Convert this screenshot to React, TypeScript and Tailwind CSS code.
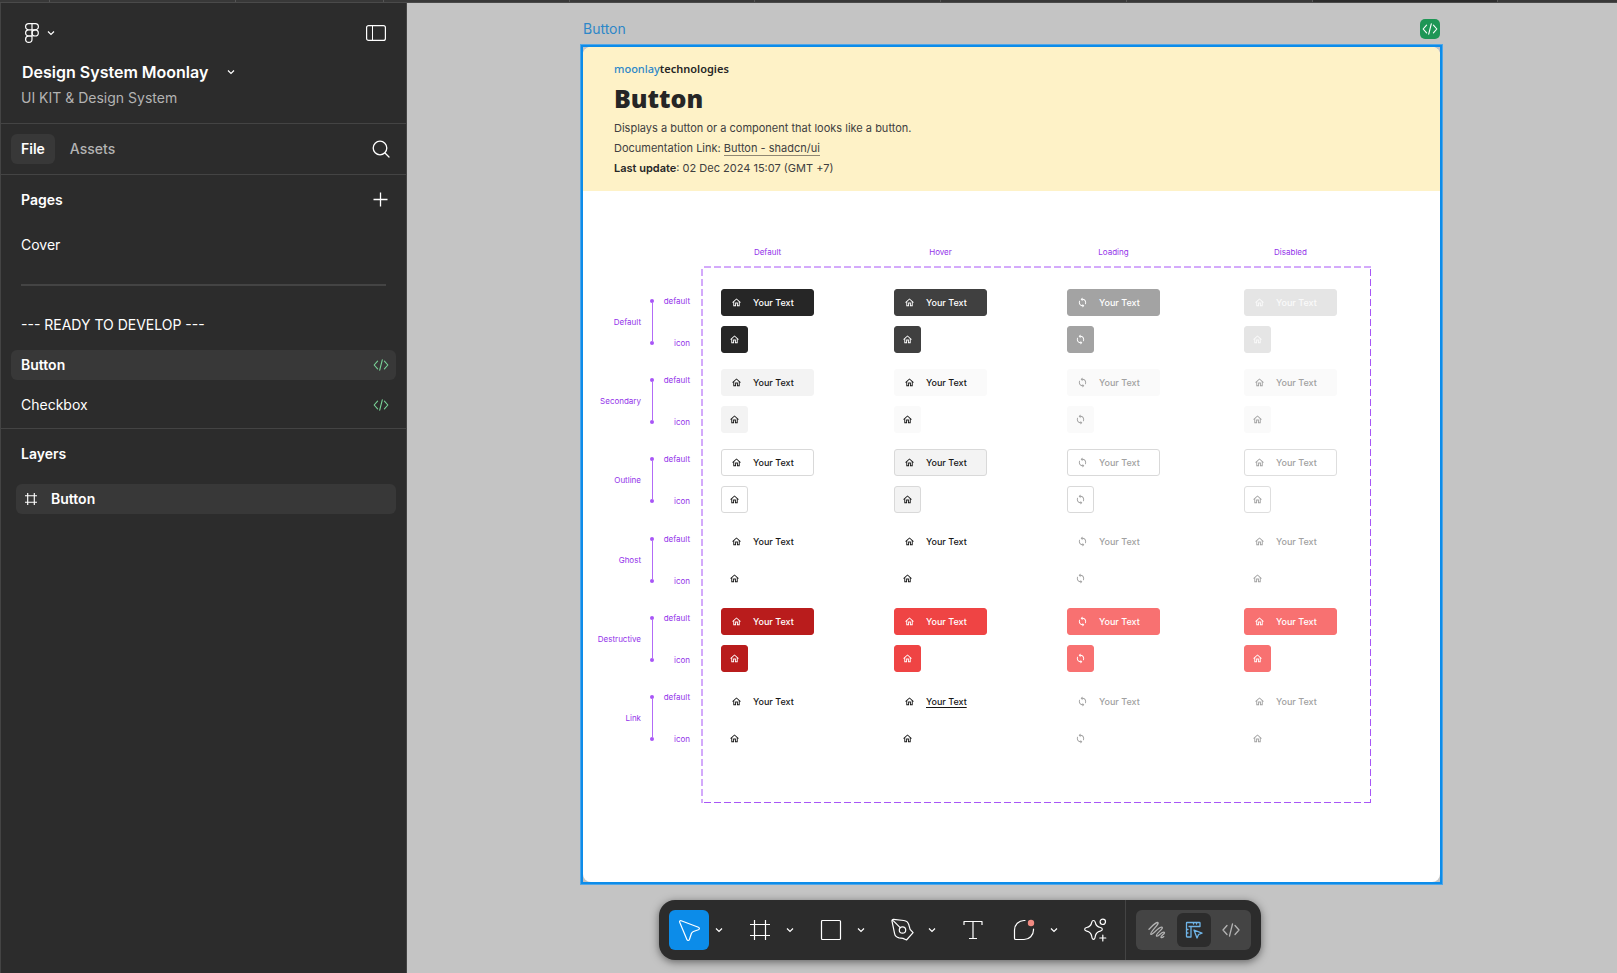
import { ReactNode } from 'react';
import { MdOutlineHome, MdSync } from 'react-icons/md';
import clsx from 'clsx';

type State = 'default' | 'hover' | 'loading' | 'disabled';

interface Variant {
  name: string;
  styles: Record<State, string>;
}

const STATES: { id: State; label: string }[] = [
  { id: 'default', label: 'Default' },
  { id: 'hover', label: 'Hover' },
  { id: 'loading', label: 'Loading' },
  { id: 'disabled', label: 'Disabled' },
];

const plain = {
  default: 'border-transparent text-neutral-900',
  hover: 'border-transparent text-neutral-900',
  loading: 'border-transparent text-neutral-400',
  disabled: 'border-transparent text-neutral-400',
};

const VARIANTS: Variant[] = [
  {
    name: 'Default',
    styles: {
      default: 'border-[#262626] bg-[#262626] text-white',
      hover: 'border-[#404040] bg-[#404040] text-white',
      loading: 'border-[#a3a3a3] bg-[#a3a3a3] text-white',
      disabled: 'border-[#e5e5e5] bg-[#e5e5e5] text-[#fafafa]',
    },
  },
  {
    name: 'Secondary',
    styles: {
      default: 'border-[#f3f3f3] bg-[#f3f3f3] text-neutral-900',
      hover: 'border-[#fafafa] bg-[#fafafa] text-neutral-900',
      loading: 'border-[#fafafa] bg-[#fafafa] text-neutral-400',
      disabled: 'border-[#fafafa] bg-[#fafafa] text-neutral-400',
    },
  },
  {
    name: 'Outline',
    styles: {
      default: 'border-[#d9d9d9] bg-white text-neutral-900',
      hover: 'border-[#d9d9d9] bg-[#f3f3f3] text-neutral-900',
      loading: 'border-[#d9d9d9] bg-white text-neutral-400',
      disabled: 'border-[#dedede] bg-white text-neutral-400',
    },
  },
  { name: 'Ghost', styles: plain },
  {
    name: 'Destructive',
    styles: {
      default: 'border-[#b91c1c] bg-[#b91c1c] text-white',
      hover: 'border-[#ef4444] bg-[#ef4444] text-white',
      loading: 'border-[#f87171] bg-[#f87171] text-white',
      disabled: 'border-[#f87171] bg-[#f87171] text-white',
    },
  },
  { name: 'Link', styles: plain },
];

const TABS = [
  'w-[50px]',
  'w-[186px]',
  'w-[148px]',
  'w-[186px]',
  'w-[185px]',
  'w-[186px]',
  'w-[186px]',
  'w-[186px]',
  'w-[185px] bg-[#2c2c2c]',
];

const COLUMNS = 'grid grid-cols-[173fr_173fr_177fr_127fr] pl-5';

function Chevron() {
  return (
    <svg width="8" height="8" viewBox="0 0 8 8" fill="none" stroke="currentColor">
      <path d="M1 2.5 4 5.500 7 2.500" strokeWidth="1.200" />
    </svg>
  );
}

function CodeIcon({ className }: { className?: string }) {
  return (
    <svg
      viewBox="0 0 18 14"
      className={className}
      fill="none"
      stroke="currentColor"
      strokeWidth="1.3"
      strokeLinecap="round"
      strokeLinejoin="round"
    >
      <path d="M5 2.5 1 7l4 4.5M13 2.5 17 7l-4 4.5M10.5 1l-3 12" />
    </svg>
  );
}

function FrameIcon({ className, strokeWidth = 1.2 }: { className?: string; strokeWidth?: number }) {
  return (
    <svg viewBox="0 0 20 20" className={className} fill="none" stroke="currentColor">
      <path d="M4.500 0v20M15.500 0v20M0 4.500h20M0 15.500h20" strokeWidth={strokeWidth} />
    </svg>
  );
}

function FigmaIcon() {
  return (
    <svg width="14" height="20" viewBox="0 0 14 20" fill="none" stroke="currentColor" strokeWidth="1.2">
      <path d="M7 .6H3.700a3.100 3.100 0 0 0 0 6.200H7zM7 .6h3.300a3.100 3.100 0 0 1 0 6.200H7zM7 6.800H3.700a3.100 3.100 0 0 0 0 6.200H7z" />
      <path d="M7 13H3.700a3.200 3.200 0 1 0 3.300 3.200z" />
      <circle cx="10.200" cy="9.900" r="3.100" />
    </svg>
  );
}

function PageRow({ name, active }: { name: string; active?: boolean }) {
  return (
    <button
      className={clsx(
        'flex h-[30px] items-center justify-between rounded-md pl-[10px] pr-[7px]',
        active && 'bg-[#383838] font-semibold'
      )}
    >
      {name}
      <CodeIcon className="h-3 w-4 text-[#79d297]" />
    </button>
  );
}

function Sidebar() {
  return (
    <aside className="flex w-[407px] shrink-0 flex-col border-x border-[#444] bg-[#2c2c2c] text-[14px] leading-5 text-white">
      <header className="border-b border-[#444] pb-[15px] pl-5 pr-5 pt-5">
        <div className="flex items-center justify-between pl-1">
          <button className="flex items-center gap-2" aria-label="Main menu">
            <FigmaIcon />
            <Chevron />
          </button>
          <button aria-label="Minimize UI">
            <svg width="20" height="16" viewBox="0 0 20 16" fill="none" stroke="currentColor">
              <rect x=".6" y=".6" width="18.800" height="14.800" rx="2" strokeWidth="1.2" />
              <path d="M6.500 .6v14.800" />
            </svg>
          </button>
        </div>
        <button className="mt-[17px] flex items-center gap-[19px] pl-px text-[16px] leading-6 font-semibold">
          Design System Moonlay
          <Chevron />
        </button>
        <p className="mt-1 text-[#b3b3b3]">UI KIT &amp; Design System</p>
      </header>

      <nav className="flex items-center border-b border-[#444] py-[10px] pl-[10px] pr-4">
        <button className="h-[30px] rounded-md bg-[#383838] px-[10px] font-semibold">File</button>
        <button className="ml-[15px] h-[30px] font-medium text-[#b3b3b3]">Assets</button>
        <button className="ml-auto" aria-label="Search">
          <svg width="18" height="18" viewBox="0 0 18 18" fill="none" stroke="currentColor" strokeWidth="1.3">
            <circle cx="8" cy="8" r="6.800" />
            <path d="m13 13 4 4" strokeLinecap="round" />
          </svg>
        </button>
      </nav>

      <section className="flex flex-col border-b border-[#444] px-[10px] pb-2">
        <div className="mt-[15px] flex items-center justify-between pl-[10px] pr-2">
          <h2 className="font-semibold">Pages</h2>
          <button aria-label="Add new page">
            <svg width="16" height="20" viewBox="0 0 16 20" stroke="currentColor" strokeWidth="1.3">
              <path d="M8.500 2.500v14M1.500 9.500h14" />
            </svg>
          </button>
        </div>
        <button className="mt-5 h-[30px] pl-[10px] text-left">Cover</button>
        <hr className="ml-[10px] mr-[10px] mt-6 border-t-2 border-[#444]" />
        <button className="mt-6 h-[30px] pl-[10px] text-left">--- READY TO DEVELOP ---</button>
        <div className="mt-[10px] flex flex-col gap-[10px]">
          <PageRow name="Button" active />
          <PageRow name="Checkbox" />
        </div>
      </section>

      <section className="pl-[15px] pr-[10px]">
        <h2 className="mt-[15px] pl-[5px] font-semibold">Layers</h2>
        <button className="mt-5 flex h-[30px] w-full items-center gap-[14px] rounded-md bg-[#383838] pl-[9px] font-semibold">
          <FrameIcon className="h-3 w-3" strokeWidth={1.9} />
          Button
        </button>
      </section>
    </aside>
  );
}

function VariantLabel({ name }: { name: string }) {
  return (
    <div className="flex items-center justify-end">
      <span>{name}</span>
      <div className="mx-[9px] flex h-[46px] w-1 flex-col items-center">
        <i className="size-1 rounded-full bg-[#a855f7]" />
        <i className="w-px flex-1 bg-[#b26bf7]" />
        <i className="size-1 rounded-full bg-[#a855f7]" />
      </div>
      <div className="flex h-[52px] w-[27px] flex-col items-end justify-between">
        <span>default</span>
        <span>icon</span>
      </div>
    </div>
  );
}

function VariantCell({ variant, state }: { variant: Variant; state: State }) {
  const Icon = state === 'loading' ? MdSync : MdOutlineHome;
  const style = variant.styles[state];
  const underlined = variant.name === 'Link' && state === 'hover';

  return (
    <div className="flex flex-col items-start gap-[10px]">
      <button
        className={clsx('flex h-[27px] w-[93px] items-center gap-[11px] rounded-[3px] border pl-[9px]', style)}
        disabled={state === 'disabled'}
      >
        <Icon size={11} />
        <span className={clsx(underlined && 'underline underline-offset-2')}>Your Text</span>
      </button>
      <button
        className={clsx('flex size-[27px] items-center justify-center rounded-[3px] border', style)}
        disabled={state === 'disabled'}
        aria-label={`${variant.name} icon`}
      >
        <Icon size={11} />
      </button>
    </div>
  );
}

function DashedOutline() {
  return (
    <svg
      className="pointer-events-none absolute inset-0 h-full w-full overflow-visible"
      stroke="#a855f7"
      strokeDasharray="7 3"
    >
      <line x1="3" y1="1" x2="100%" y2="1" />
      <line x1="1" y1="3" x2="1" y2="100%" />
      <line x1="100%" y1="3" x2="100%" y2="100%" transform="translate(-.5)" />
      <line x1="3" y1="100%" x2="100%" y2="100%" transform="translate(0 -.5)" />
    </svg>
  );
}

function ButtonFrame() {
  return (
    <article className="border-2 border-[#0d8ce9] bg-[#c4c4c4] ring-1 ring-[#4fa6e8]">
      <div className="overflow-hidden rounded-lg bg-white">
        <header className="h-36 bg-[#fef2c7] pl-[31px] pt-3 text-[11px] leading-5 text-[#404040]">
          <p className="font-['Noto_Sans',sans-serif] text-[11px] leading-5 font-semibold text-[#262626]">
            <span className="font-medium text-[#2d87c8]">moonlay</span>technologies
          </p>
          <h1 className="pt-px font-['Open_Sans',sans-serif] text-[25px] leading-9 font-extrabold text-[#262626]">
            Button
          </h1>
          <p className="mt-[2px]">Displays a button or a component that looks like a button.</p>
          <p>
            Documentation Link:{' '}
            <a href="#shadcn" className="border-b border-[#8f8672]">
              Button - shadcn/ui
            </a>
          </p>
          <p>
            <strong className="font-semibold text-[#262626]">Last update</strong>: 02 Dec 2024 15:07 (GMT +7)
          </p>
        </header>

        <div className="flex pb-[79px] pr-[69px] pt-14">
          <div className="w-[118px] shrink-0 pr-[11px] pt-[49px] text-[8px] leading-[10px] text-[#9333ea]">
            <div className="flex h-[448px] flex-col justify-between">
              {VARIANTS.map((variant) => (
                <VariantLabel key={variant.name} name={variant.name} />
              ))}
            </div>
          </div>

          <div className="flex-1">
            <div className={clsx(COLUMNS, 'mb-[9px] text-[8px] leading-[10px] text-[#9333ea]')}>
              {STATES.map((state) => (
                <span key={state.id} className="w-[93px] text-center">
                  {state.label}
                </span>
              ))}
            </div>
            <div className="relative h-[537px] pt-[23px] text-[9px] leading-[11px] font-medium">
              <DashedOutline />
              <div className="flex h-[463px] flex-col justify-between">
                {VARIANTS.map((variant) => (
                  <div key={variant.name} className={COLUMNS}>
                    {STATES.map((state) => (
                      <VariantCell key={state.id} variant={variant} state={state.id} />
                    ))}
                  </div>
                ))}
              </div>
            </div>
          </div>
        </div>
      </div>
    </article>
  );
}

function Tool({
  label,
  active,
  menu,
  children,
}: {
  label: string;
  active?: boolean;
  menu?: boolean;
  children: ReactNode;
}) {
  return (
    <div className="flex items-center">
      <button
        aria-label={label}
        className={clsx('flex size-10 items-center justify-center rounded-md', active && 'bg-[#0c8ce9]')}
      >
        {children}
      </button>
      {menu && (
        <button aria-label={`${label} options`} className="flex h-10 w-5 items-center justify-center">
          <Chevron />
        </button>
      )}
    </div>
  );
}

function Toolbar() {
  const stroke = {
    width: 24,
    height: 24,
    viewBox: '0 0 24 24',
    fill: 'none',
    stroke: 'currentColor',
    strokeWidth: 1.2,
    strokeLinejoin: 'round' as const,
    strokeLinecap: 'round' as const,
  };

  return (
    <div className="absolute bottom-[13px] left-[252px] flex h-[60px] items-center rounded-2xl bg-[#2c2c2c] px-[10px] text-white shadow-[0_2px_8px_rgba(0,0,0,0.5)]">
      <div className="flex gap-[11px]">
        <Tool label="Move" active menu>
          <svg {...stroke}>
            <path d="M2.700 4.200c-.4-1.100.4-1.900 1.500-1.500l17.200 6.600c1.300.5 1.300 2 0 2.500l-5 1.700c-1 .4-1.600 1-2 2l-2 6c-.5 1.300-2 1.300-2.500 0z" />
          </svg>
        </Tool>
        <Tool label="Frame" menu>
          <FrameIcon className="size-5" />
        </Tool>
        <Tool label="Rectangle" menu>
          <svg {...stroke}>
            <rect x="2.500" y="2.500" width="19" height="19" rx="1" />
          </svg>
        </Tool>
        <Tool label="Pen" menu>
          <svg {...stroke}>
            <path d="M2 3.200c-.3-1.100.5-1.900 1.600-1.800l10.200 1.100c2.200.3 4.200 1.600 4.900 3.900l1.400 5 3 3.300-6.600 7.300-3.500-1.600-3.900-.6c-2.200-.4-4.100-2-4.500-4.200zM2.400 1.900l7.800 7.800" />
            <circle cx="12.500" cy="12" r="3.200" />
          </svg>
        </Tool>
        <Tool label="Text">
          <svg {...stroke} strokeLinecap="butt">
            <path d="M3 7V3.500h18V7M12 3.500v17M8 20.500h8" />
          </svg>
        </Tool>
        <Tool label="Comment" menu>
          <svg {...stroke}>
            <path d="M13 2.500h-1A9.500 9.500 0 0 0 2.500 12v8.200c0 .8.5 1.300 1.300 1.300H12a9.500 9.500 0 0 0 9.500-9.500v-1" />
            <circle cx="19" cy="5" r="3.200" fill="#f28b82" stroke="none" />
          </svg>
        </Tool>
        <Tool label="Actions">
          <svg {...stroke}>
            <path d="M10.500 2.500c1 0 1.500.7 1.800 1.900.6 3.400 1.700 4.500 5 5.100 2.700.5 2.700 3.100 0 3.600-3.300.7-4.400 1.700-5 5.100-.5 4.200-3.100 4.200-3.600 0-.6-3.400-1.700-4.400-5-5.100-2.700-.5-2.700-3.100 0-3.600 3.300-.6 4.400-1.700 5-5.100.3-1.200.8-1.900 1.800-1.900z" />
            <circle cx="19.800" cy="3.800" r="2.700" />
            <path d="M19.800 17v6M16.800 20h6" />
          </svg>
        </Tool>
      </div>

      <div className="ml-[10px] mr-[10px] h-full w-px bg-[#444]" />

      <div className="flex h-10 items-center rounded-md bg-[#444] px-[2px] text-[#b3b3b3]">
        <button aria-label="Draw" className="flex w-[37px] justify-center">
          <svg {...stroke} width="18" height="18" viewBox="0 0 18 18" strokeWidth="1.3">
            <path d="M1 8.300C3.500 6 7 1.600 9.500 1.500c3.500.5-8 9.500-6.700 11.700 1 1.800 8.500-8.200 11.200-7 2.200 1.300-6.800 6.800-5.500 8.800 1.200 1.400 5.500-5 7.700-3.800 1.600 1.100-4.200 3.800-3.200 5.200.7.700 1.900 0 2.800-.8" />
          </svg>
        </button>
        <button
          aria-label="Design"
          className="mx-[2px] flex size-[34px] items-center justify-center rounded-md bg-[#2c2c2c] text-[#6fb5e8]"
        >
          <svg {...stroke} width="18" height="18" viewBox="0 0 18 18" strokeWidth="1.3">
            <path d="M2 1.500h12.500a.5.500 0 0 1 .5.500v3.500H6V16H2a.5.500 0 0 1-.5-.5V2a.5.500 0 0 1 .5-.5zM6 5.500H4M8.500 1.500v1.500M11.500 1.500v1.500M1.500 8.500H3M1.500 12H3" />
            <path d="M9 9l8 3.200-3.400 1.300-1.600 3.500z" />
          </svg>
        </button>
        <button aria-label="Dev Mode" className="flex w-9 justify-center">
          <CodeIcon className="h-[14px] w-[18px]" />
        </button>
      </div>
    </div>
  );
}

export default function App() {
  return (
    <div className="flex min-h-screen flex-col bg-[#2c2c2c] font-['Inter','Liberation_Sans',sans-serif]">
      <div className="flex h-[3px] overflow-hidden border-b border-[#4a4a4a] bg-[#383838]">
        {TABS.map((tab, i) => (
          <div key={i} className={clsx('shrink-0 border-r border-[#555]', tab)} />
        ))}
      </div>
      <div className="flex flex-1">
        <Sidebar />
        <main className="relative flex-1 overflow-hidden bg-[#c4c4c4] pb-[89px] pr-px pt-4">
          <div className="mx-auto w-full max-w-[861px]">
            <div className="mb-[6px] flex h-5 items-center justify-between pl-[2px] pr-[2px]">
              <span className="text-[14px] leading-5 text-[#2d87c8]">Button</span>
              <span className="flex size-5 items-center justify-center rounded-[5px] bg-[#1e9655] text-white">
                <CodeIcon className="h-3 w-4" />
              </span>
            </div>
            <ButtonFrame />
          </div>
          <Toolbar />
        </main>
      </div>
    </div>
  );
}
